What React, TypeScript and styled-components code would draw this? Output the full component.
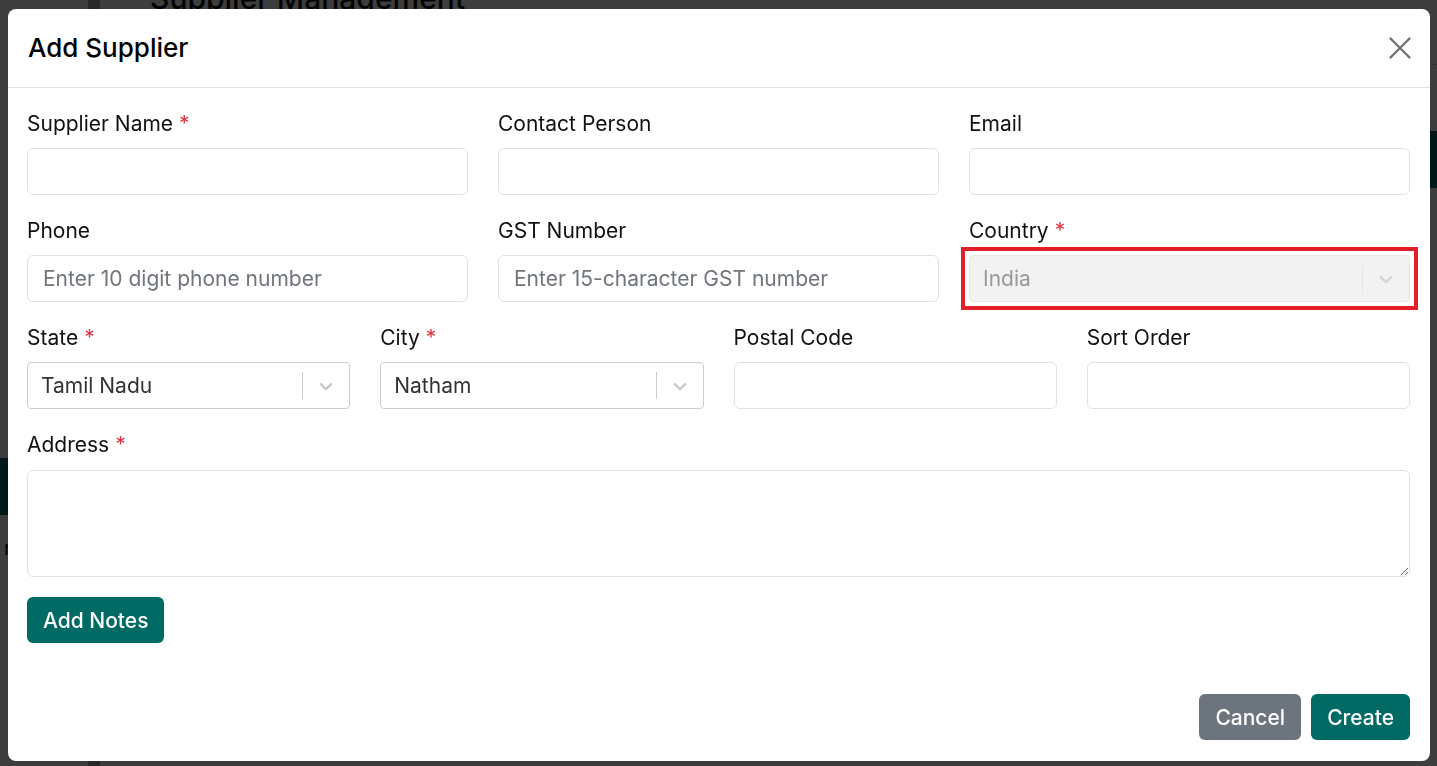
import styled, { createGlobalStyle } from "styled-components";

const teal = "#006a64";
const fieldBorder = "#dfe1e6";

const GlobalStyle = createGlobalStyle`
  * { box-sizing: border-box; }
  html, body { margin: 0; padding: 0; }
  body {
    font-family: Inter, "Noto Sans", "Liberation Sans", sans-serif;
    color: #111;
    overflow: hidden;
  }
`

// ---- page behind the dialog ----
const Page = styled.div`
  display: flex;
  width: 100vw;
  height: 100vh;
  background: #fff;
`

const Sidebar = styled.nav`
  width: 100px;
  flex-shrink: 0;
  display: flex;
  flex-direction: column;
  padding-top: 458px;
  border-right: 12px solid #a8a8a8;
`

const NavItem = styled.div<{ $active?: boolean }>`
  height: 57px;
  background: ${p => (p.$active ? teal : "transparent")};
  font-size: 20px;
  line-height: 66px;
  padding-left: 4px;
  color: #000;
`

const Main = styled.main`
  flex: 1;
  display: flex;
  flex-direction: column;
`

const PageHeading = styled.h1`
  margin: -22px 0 0 50px;
  font-size: 30px;
  font-weight: 500;
  line-height: 40px;
  height: 87px;
  border-bottom: 1px solid #ccc;
`

const TableHead = styled.div`
  margin-top: 66px;
  height: 57px;
  background: ${teal};
`

// ---- dialog ----
const Backdrop = styled.div`
  position: fixed;
  inset: 0;
  background: rgba(0, 0, 0, 0.76);
  padding: 9px 7px 5px 8px;
`

const Modal = styled.div`
  height: 752px;
  background: #fff;
  border-radius: 8px;
  display: flex;
  flex-direction: column;
`

const Header = styled.div`
  height: 79px;
  padding: 0 20px;
  display: flex;
  align-items: center;
  justify-content: space-between;
  border-bottom: 1px solid #dee2e6;
`

const Title = styled.h2`
  margin: -2px 0 0;
  font-size: 26px;
  font-weight: 500;
  color: #000;
`

const CloseButton = styled.button`
  width: 24px;
  height: 24px;
  padding: 0;
  margin-right: -2px;
  border: none;
  background: none;
  cursor: pointer;
  color: #6e6e6e;
  display: flex;
  align-items: center;
  justify-content: center;
`

const Body = styled.div`
  flex: 1;
  padding: 22px 20px 0 19px;
`

const Row = styled.div<{ $cols: number }>`
  display: grid;
  grid-template-columns: repeat(${p => p.$cols}, 1fr);
  column-gap: 30px;
`

const Field = styled.div<{ $space?: number }>`
  display: flex;
  flex-direction: column;
  margin-bottom: ${p => p.$space ?? 22}px;
`

const Label = styled.label`
  font-size: 21px;
  line-height: 27px;
  margin-bottom: 11px;
  color: #111;
`

const Star = styled.span`
  color: #e2323f;
  margin-left: 6px;
`

const Input = styled.input`
  height: 47px;
  width: 100%;
  border: 1px solid ${fieldBorder};
  border-radius: 6px;
  padding: 0 15px;
  font: inherit;
  font-size: 21px;
  color: #222;
  outline: none;

  &::placeholder {
    color: #6f757b;
  }
`

const TextArea = styled.textarea`
  height: 107px;
  width: 100%;
  margin-top: 1px;
  border: 1px solid ${fieldBorder};
  border-radius: 6px;
  padding: 10px 15px;
  font: inherit;
  font-size: 21px;
  outline: none;
`

const Highlight = styled.div`
  outline: 4px solid #e3202a;
  outline-offset: 4px;
`

const SelectBox = styled.div<{ $disabled?: boolean }>`
  height: 47px;
  display: flex;
  align-items: center;
  border: 1px solid ${p => (p.$disabled ? "#e6e6e6" : "#cccccc")};
  border-radius: 4px;
  background: ${p => (p.$disabled ? "#f2f2f2" : "#fff")};
`

const SelectValue = styled.div<{ $disabled?: boolean }>`
  flex: 1;
  padding: 0 13px;
  font-size: 21px;
  color: ${p => (p.$disabled ? "#999" : "#333")};
`

const Separator = styled.span<{ $disabled?: boolean }>`
  width: 1px;
  align-self: stretch;
  margin: 9px 0;
  background: ${p => (p.$disabled ? "#e6e6e6" : "#cccccc")};
`

const Indicator = styled.div<{ $disabled?: boolean }>`
  padding: 0 12px;
  display: flex;
  color: ${p => (p.$disabled ? "#d4d4d4" : "#c8c8c8")};
`

const Actions = styled.div`
  display: flex;
  gap: 10px;
`

const Footer = styled.div`
  display: flex;
  justify-content: flex-end;
  gap: 10px;
  padding: 0 20px 21px;
`

const Button = styled.button<{ $variant?: "primary" | "secondary" }>`
  height: 46px;
  padding: 0 16px;
  border: none;
  border-radius: 6px;
  background: ${p => (p.$variant === "secondary" ? "#6c757d" : teal)};
  color: #fff;
  font: inherit;
  font-size: 21px;
  font-weight: 500;
  cursor: pointer;
`

const Chevron = () => (
  <svg width="22" height="22" viewBox="0 0 20 20" fill="currentColor" aria-hidden>
    <path d="M4.516 7.548c0.436-0.446 1.043-0.481 1.576 0l3.908 3.747 3.908-3.747c0.533-0.481 1.141-0.446 1.574 0 0.436 0.445 0.408 1.197 0 1.615-0.406 0.418-4.695 4.502-4.695 4.502-0.217 0.223-0.502 0.335-0.787 0.335s-0.57-0.112-0.789-0.335c0 0-4.287-4.084-4.695-4.502s-0.436-1.170 0-1.615z" />
  </svg>
)

type SelectProps = { value: string; disabled?: boolean }

const Select = ({ value, disabled }: SelectProps) => (
  <SelectBox $disabled={disabled}>
    <SelectValue $disabled={disabled}>{value}</SelectValue>
    <Separator $disabled={disabled} />
    <Indicator $disabled={disabled}>
      <Chevron />
    </Indicator>
  </SelectBox>
)

type FieldProps = {
  label: string
  required?: boolean
  space?: number
  children: React.ReactNode
}

const FormField = ({ label, required, space, children }: FieldProps) => (
  <Field $space={space}>
    <Label>
      {label}
      {required && <Star>*</Star>}
    </Label>
    {children}
  </Field>
)

const App = () => {
  return (
    <>
      <GlobalStyle />
      <Page>
        <Sidebar>
          <NavItem $active />
          <NavItem>r</NavItem>
        </Sidebar>
        <Main>
          <PageHeading>Supplier Management</PageHeading>
          <TableHead />
        </Main>
      </Page>

      <Backdrop>
        <Modal role="dialog">
          <Header>
            <Title>Add Supplier</Title>
            <CloseButton aria-label="Close">
              <svg width="22" height="22" viewBox="0 0 22 22" stroke="currentColor" strokeWidth="2.2" strokeLinecap="round">
                <path d="M1.5 1.5l19 19M20.5 1.5l-19 19" />
              </svg>
            </CloseButton>
          </Header>

          <Body>
            <Row $cols={3}>
              <FormField label="Supplier Name" required>
                <Input />
              </FormField>
              <FormField label="Contact Person">
                <Input />
              </FormField>
              <FormField label="Email">
                <Input type="email" />
              </FormField>
            </Row>
            <Row $cols={3}>
              <FormField label="Phone">
                <Input placeholder="Enter 10 digit phone number" />
              </FormField>
              <FormField label="GST Number">
                <Input placeholder="Enter 15-character GST number" />
              </FormField>
              <FormField label="Country" required>
                <Highlight>
                  <Select value="India" disabled />
                </Highlight>
              </FormField>
            </Row>
            <Row $cols={4}>
              <FormField label="State" required>
                <Select value="Tamil Nadu" />
              </FormField>
              <FormField label="City" required>
                <Select value="Natham" />
              </FormField>
              <FormField label="Postal Code">
                <Input />
              </FormField>
              <FormField label="Sort Order">
                <Input />
              </FormField>
            </Row>
            <FormField label="Address" required space={20}>
              <TextArea />
            </FormField>
            <Actions>
              <Button>Add Notes</Button>
            </Actions>
          </Body>

          <Footer>
            <Button $variant="secondary">Cancel</Button>
            <Button>Create</Button>
          </Footer>
        </Modal>
      </Backdrop>
    </>
  )
}

export default App
